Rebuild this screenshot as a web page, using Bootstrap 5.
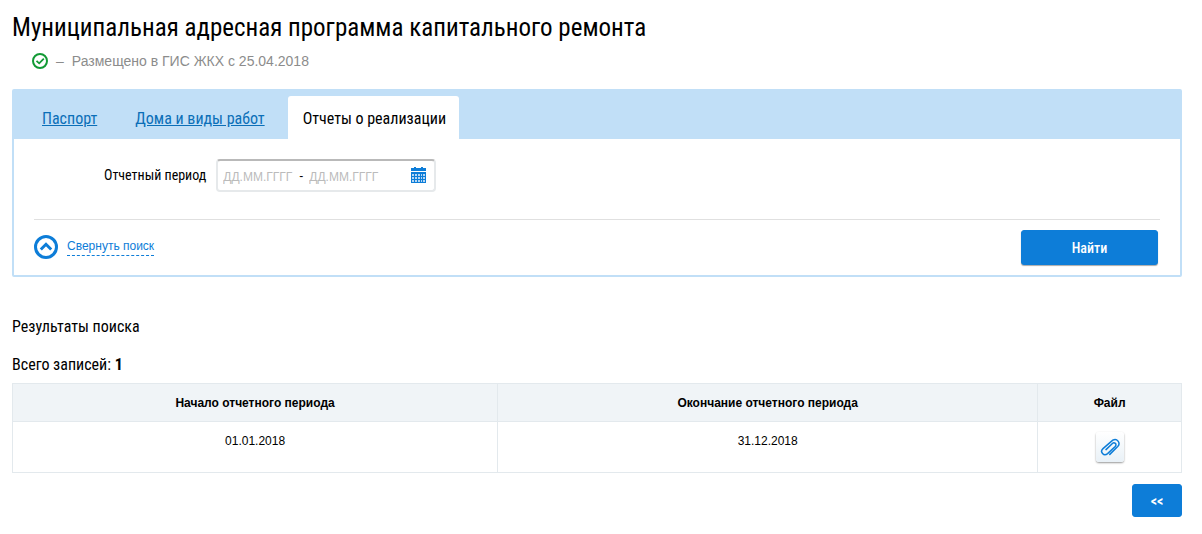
<!DOCTYPE html>
<html lang="ru">
<head>
<meta charset="utf-8">
<meta name="viewport" content="width=device-width, initial-scale=1">
<title>Муниципальная адресная программа капитального ремонта</title>
<link href="https://cdn.jsdelivr.net/npm/bootstrap@5.3.0/dist/css/bootstrap.min.css" rel="stylesheet">
<style>
  :root { --brand: #0d7dd8; --pale: #c1dff7; --line: #e3e9ed; --condensed: "Roboto Condensed", "Liberation Sans Narrow", Roboto, sans-serif; }
  body { font-family: "Liberation Sans", Arial, sans-serif; font-size: 12px; line-height: 18px; color: #000; background: #fff; }
  .page { padding: 12px 20px 16px 12px; }
  .cond { font-family: var(--condensed); }
  .page-title { font-size: 25px; line-height: 32px; font-weight: 400; margin: 0; }
  .status { font-size: 14px; line-height: 18px; color: #8c8c8c; padding: 8px 20px 0; margin-bottom: 19px; }
  .panel { border: 2px solid var(--pale); border-radius: 2px; }
  .panel-tabs { background: var(--pale); padding: 5px 13px 0; gap: 8px; font-size: 16px; line-height: 20px; }
  .panel-tabs .nav-link { padding: 13px 15px 10px; color: #0b6fb8; text-decoration: underline; border-radius: 3px 3px 0 0; }
  .panel-tabs .nav-link.active { background: #fff; color: #000; text-decoration: none; padding-right: 13px; }
  .panel-body { padding: 20px 20px 10px; }
  .period { padding-left: 70px; gap: 10px; font-size: 14px; }
  .period label { padding-bottom: 2px; }
  .range { width: 220px; height: 33px; border: 2px solid #e6e9eb; border-top-color: #b9b9b9; border-radius: 4px; padding: 0 8px 0 5px; font-family: "Liberation Sans", Arial, sans-serif; font-size: 12px; }
  .range input { width: 76px; padding: 2px 0 0; border: 0; outline: 0; background: none; color: #000; }
  .range span { width: 10px; }
  .range input::placeholder { color: #bbb; opacity: 1; }
  .icon-button { border: 0; background: none; padding: 0 0 2px; line-height: 0; }
  .search-footer { border-top: 1px solid #e0e0e0; margin-top: 27px; padding: 10px 2px 0 0; }
  .collapse-link { border: 0; background: none; padding: 0 0 2px; gap: 9px; color: var(--brand); }
  .collapse-link span { border-bottom: 1px dashed var(--brand); }
  .btn-brand { --bs-btn-color: #fff; --bs-btn-bg: var(--brand); --bs-btn-border-color: var(--brand); --bs-btn-hover-color: #fff; --bs-btn-hover-bg: #0a6cbc; --bs-btn-hover-border-color: #0a6cbc; --bs-btn-border-radius: 3px; --bs-btn-font-size: 14px; --bs-btn-font-weight: 500; --bs-btn-line-height: 20px; }
  .btn-find { width: 137px; height: 35px; box-shadow: 0 1px 1px #aaa; }
  .btn-back { width: 50px; height: 33px; margin-top: 11px; --bs-btn-font-weight: 700; }
  .results { font-size: 16px; line-height: 20px; margin: 40px 0 18px; font-weight: 400; }
  .total { font-size: 16px; line-height: 20px; margin: 0 0 8px; }
  .report-table { border-color: var(--line); color: #000; text-align: center; margin: 0; table-layout: fixed; }
  .report-table th { background: #f0f4f7; font-weight: 700; padding: 10px 10px 9px; }
  .report-table td { padding: 10px 10px; }
  .col-start { width: 41.5%; } .col-end { width: 46.2%; } .col-file { width: 12.3%; }
  .file-button { width: 28px; height: 30px; border: 0; border-radius: 3px; background: linear-gradient(#fff, #e9f1f7); box-shadow: 0 1px 2px #999; padding: 0; }
</style>
</head>
<body>
<main class="page">
  <h1 class="page-title cond">Муниципальная адресная программа капитального ремонта</h1>
  <div class="status d-flex align-items-center gap-2">
    <svg width="16" height="16" viewBox="0 0 16 16" fill="none" stroke="#129a35" stroke-width="2" aria-hidden="true"><circle cx="8" cy="8" r="7"/><path d="M4.500 7.800 7.200 10.300 11.800 5.700" stroke-width="1.800"/></svg>
    <span>–</span><span>Размещено в ГИС ЖКХ с 25.04.2018</span>
  </div>

  <section class="panel">
    <ul class="nav panel-tabs cond">
      <li class="nav-item"><a class="nav-link" href="#">Паспорт</a></li>
      <li class="nav-item"><a class="nav-link" href="#">Дома и виды работ</a></li>
      <li class="nav-item"><a class="nav-link active" aria-current="page" href="#">Отчеты о реализации</a></li>
    </ul>
    <form class="panel-body">
      <div class="period cond d-flex align-items-center">
        <label for="from">Отчетный период</label>
        <div class="range d-flex align-items-center">
          <input id="from" type="text" placeholder="ДД.ММ.ГГГГ">
          <span>-</span>
          <input type="text" placeholder="ДД.ММ.ГГГГ" aria-label="Конец отчетного периода">
          <button type="button" class="icon-button ms-auto" aria-label="Открыть календарь">
            <svg width="15" height="16" viewBox="0 0 15 16"><path d="M3 0h2v1h5V0h2v1h3v3H0V1h3zM0 5h15v11H0z" fill="#0d7dd8"/><path d="M1 7h2v2H1zm3 0h2v2H4zm3 0h2v2H7zm3 0h1v2h-1zm2 0h2v2h-2zM1 10h2v2H1zm3 0h2v2H4zm3 0h2v2H7zm3 0h1v2h-1zm2 0h2v2h-2zM1 13h2v2H1zm3 0h2v2H4zm3 0h2v2H7zm3 0h1v2h-1zm2 0h2v2h-2z" fill="#b5d7f5"/></svg>
          </button>
        </div>
      </div>
      <div class="search-footer d-flex align-items-center justify-content-between">
        <button type="button" class="collapse-link d-flex align-items-center">
          <svg width="24" height="24" viewBox="0 0 24 24" fill="none" stroke="#0d7dd8" stroke-width="3" aria-hidden="true"><circle cx="12" cy="12" r="10.5"/><path d="M6.800 14.500 12 9.300l5.200 5.200"/></svg>
          <span>Свернуть поиск</span>
        </button>
        <button type="submit" class="btn btn-brand btn-find cond">Найти</button>
      </div>
    </form>
  </section>

  <h2 class="results cond">Результаты поиска</h2>
  <p class="total cond">Всего записей: <b>1</b></p>
  <table class="table table-bordered report-table">
    <colgroup><col class="col-start"><col class="col-end"><col class="col-file"></colgroup>
    <thead><tr><th scope="col">Начало отчетного периода</th><th scope="col">Окончание отчетного периода</th><th scope="col">Файл</th></tr></thead>
    <tbody><tr><td>01.01.2018</td><td>31.12.2018</td>
      <td><button type="button" class="file-button d-inline-flex align-items-center justify-content-center" aria-label="Скачать файл">
        <svg width="20" height="20" viewBox="0 0 20 20" fill="none" stroke="#0d7dd8" stroke-width="1.5" stroke-linecap="round"><path d="M9.800 17.400 17.700 9.600C21 6 17 .8 12.800 3.200L3 11.600c-3.600 3.400.8 8.200 4.600 5L15.200 9.500c2.200-2.400-.9-4.800-2.800-3L6 12.600"/></svg>
      </button></td></tr></tbody>
  </table>
  <div class="d-flex justify-content-end"><button type="button" class="btn btn-brand btn-back cond p-0">&lt;&lt;</button></div>
</main>
<script src="https://cdn.jsdelivr.net/npm/bootstrap@5.3.0/dist/js/bootstrap.bundle.min.js"></script>
</body>
</html>
